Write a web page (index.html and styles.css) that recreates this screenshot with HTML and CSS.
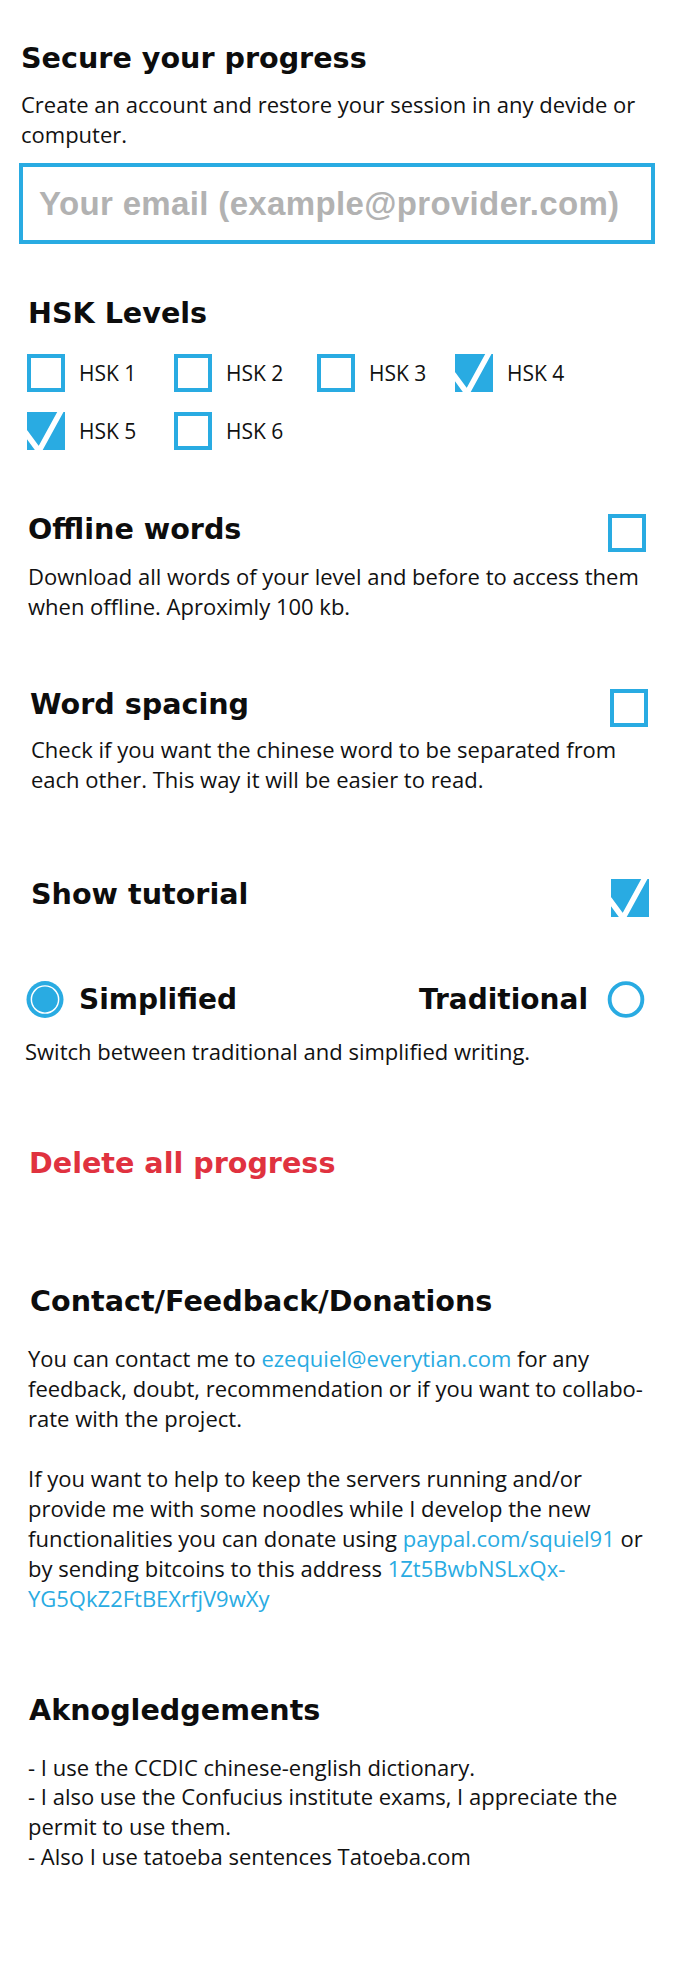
FILE: index.html
```html
<!DOCTYPE html>
<html lang="en">
<head>
<meta charset="utf-8">
<title>Settings</title>
<link rel="stylesheet" href="styles.css">
</head>
<body>
<main class="settings">

  <section class="sec sec-account">
    <h2 class="title">Secure your progress</h2>
    <p class="desc">Create an account and restore your session in any devide or<br>computer.</p>
    <input class="email" type="email" placeholder="Your email (example@provider.com)">
  </section>

  <section class="sec sec-hsk">
    <h2 class="title">HSK Levels</h2>
    <div class="levels">
      <label class="level">
        <svg class="box" viewBox="0 0 38 38"><rect x="2" y="2" width="34" height="34" fill="#fff" stroke="#29abe2" stroke-width="4"/></svg>
        <span>HSK 1</span>
      </label>
      <label class="level">
        <svg class="box" viewBox="0 0 38 38"><rect x="2" y="2" width="34" height="34" fill="#fff" stroke="#29abe2" stroke-width="4"/></svg>
        <span>HSK 2</span>
      </label>
      <label class="level">
        <svg class="box" viewBox="0 0 38 38"><rect x="2" y="2" width="34" height="34" fill="#fff" stroke="#29abe2" stroke-width="4"/></svg>
        <span>HSK 3</span>
      </label>
      <label class="level">
        <svg class="box" viewBox="0 0 38 38"><rect width="38" height="38" fill="#29abe2"/><polyline points="-2,20 12,39 35,-3" fill="none" stroke="#fff" stroke-width="5.5"/></svg>
        <span>HSK 4</span>
      </label>
      <label class="level">
        <svg class="box" viewBox="0 0 38 38"><rect width="38" height="38" fill="#29abe2"/><polyline points="-2,20 12,39 35,-3" fill="none" stroke="#fff" stroke-width="5.5"/></svg>
        <span>HSK 5</span>
      </label>
      <label class="level">
        <svg class="box" viewBox="0 0 38 38"><rect x="2" y="2" width="34" height="34" fill="#fff" stroke="#29abe2" stroke-width="4"/></svg>
        <span>HSK 6</span>
      </label>
    </div>
  </section>

  <section class="sec sec-offline">
    <div class="option">
      <h2 class="title">Offline words</h2>
      <svg class="box opt-box" viewBox="0 0 38 38"><rect x="2" y="2" width="34" height="34" fill="#fff" stroke="#29abe2" stroke-width="4"/></svg>
    </div>
    <p class="desc opt-desc">Download all words of your level and before to access them<br>when offline. Aproximly 100 kb.</p>
  </section>

  <section class="sec sec-spacing">
    <div class="option">
      <h2 class="title">Word spacing</h2>
      <svg class="box opt-box" viewBox="0 0 38 38"><rect x="2" y="2" width="34" height="34" fill="#fff" stroke="#29abe2" stroke-width="4"/></svg>
    </div>
    <p class="desc opt-desc-tight">Check if you want the chinese word to be separated from<br>each other. This way it will be easier to read.</p>
  </section>

  <section class="sec sec-tutorial">
    <div class="option">
      <h2 class="title">Show tutorial</h2>
      <svg class="box opt-box" viewBox="0 0 38 38"><rect width="38" height="38" fill="#29abe2"/><polyline points="-2,20 12,39 35,-3" fill="none" stroke="#fff" stroke-width="5.5"/></svg>
    </div>
  </section>

  <section class="sec sec-script">
    <div class="radios">
      <label class="radio">
        <svg class="dot" viewBox="0 0 38 38"><circle cx="19" cy="19" r="19" fill="#29abe2"/><circle cx="19" cy="19" r="14" fill="none" stroke="#fff" stroke-width="1.5"/></svg>
        <span class="radio-label">Simplified</span>
      </label>
      <label class="radio radio-right">
        <span class="radio-label">Traditional</span>
        <svg class="dot" viewBox="0 0 38 38"><circle cx="19" cy="19" r="16.8" fill="#fff" stroke="#29abe2" stroke-width="4"/></svg>
      </label>
    </div>
    <p class="desc script-desc">Switch between traditional and simplified writing.</p>
  </section>

  <section class="sec sec-delete">
    <button class="danger" type="button">Delete all progress</button>
  </section>

  <section class="sec sec-contact">
    <h2 class="title">Contact/Feedback/Donations</h2>
    <p class="para">You can contact me to <a class="link" href="#">ezequiel@everytian.com</a> for any<br>feedback, doubt, recommendation or if you want to collabo-<br>rate with the project.</p>
    <p class="para para-gap">If you want to help to keep the servers running and/or<br>provide me with some noodles while I develop the new<br>functionalities you can donate using <a class="link" href="#">paypal.com/squiel91</a> or<br>by sending bitcoins to this address <a class="link" href="#">1Zt5BwbNSLxQx-<br>YG5QkZ2FtBEXrfjV9wXy</a></p>
  </section>

  <section class="sec sec-ack">
    <h2 class="title">Aknogledgements</h2>
    <p class="para ack-list">- I use the CCDIC chinese-english dictionary.<br>- I also use the Confucius institute exams, I appreciate the<br>permit to use them.<br>- Also I use tatoeba sentences Tatoeba.com</p>
  </section>

</main>
</body>
</html>
```

FILE: styles.css
```css
* {
  box-sizing: border-box;
}

html, body {
  margin: 0;
  padding: 0;
  background: #ffffff;
}

body {
  color: #111111;
  font-family: "Open Sans", "Liberation Sans", sans-serif;
  font-size: 22px;
}

.settings {
  display: flex;
  flex-direction: column;
  padding-bottom: 118px;
}

.title {
  margin: 0;
  font-family: "DejaVu Sans", "Liberation Sans", sans-serif;
  font-weight: bold;
  font-size: 28.6px;
  line-height: 34px;
  color: #0d0d0d;
}

.desc {
  margin: 0;
  font-size: 22px;
  line-height: 29.5px;
  white-space: nowrap;
}

/* Secure your progress */
.sec-account {
  padding: 41px 0 0 21px;
}

.sec-account .desc {
  margin-top: 15px;
}

.email {
  display: block;
  margin: 14px 0 0 -2px;
  width: 636px;
  height: 81px;
  border: 4px solid #29abe2;
  border-radius: 0;
  padding: 0 16px;
  background: #fff;
  font-family: "Liberation Sans", Arial, sans-serif;
  font-weight: bold;
  font-size: 33px;
  letter-spacing: 0.35px;
  color: #333;
  outline: none;
}

.email::placeholder {
  color: #b2b2b2;
  opacity: 1;
}

/* HSK levels */
.sec-hsk {
  margin-top: 52px;
  padding-left: 28px;
}

.levels {
  margin-top: 24px;
  margin-left: -1px;
  display: grid;
  grid-template-columns: 147px 143px 138px auto;
  row-gap: 20px;
}

.level {
  display: flex;
  align-items: center;
  gap: 14px;
  font-size: 21px;
  line-height: 38px;
}

.box {
  display: block;
  width: 38px;
  height: 38px;
  flex: none;
}

/* options with a checkbox at the right */
.option {
  display: flex;
  justify-content: space-between;
  align-items: flex-start;
}

.opt-box {
  margin-top: 2px;
}

.sec-offline {
  margin-top: 62px;
  padding: 0 31px 0 28px;
}

.opt-desc {
  margin-top: 10px;
}

.sec-spacing {
  margin-top: 66px;
  padding: 0 29px 0 30px;
}

.opt-desc-tight {
  margin-top: 8px;
  margin-left: 1px;
}

.sec-tutorial {
  margin-top: 83px;
  padding: 0 28px 0 31px;
}

/* simplified / traditional */
.sec-script {
  margin-top: 64px;
  padding: 0 32px 0 26px;
}

.radios {
  display: flex;
  justify-content: space-between;
  align-items: center;
}

.radio {
  display: flex;
  align-items: center;
  gap: 15px;
}

.radio-right {
  gap: 19px;
}

.dot {
  display: block;
  width: 38px;
  height: 37px;
  flex: none;
}

.radio-label {
  font-family: "DejaVu Sans", "Liberation Sans", sans-serif;
  font-weight: bold;
  font-size: 28px;
  line-height: 34px;
  color: #0d0d0d;
}

.script-desc {
  margin-top: 19px;
  margin-left: -1px;
}

/* delete */
.sec-delete {
  margin-top: 79px;
  padding-left: 29px;
}

.danger {
  display: block;
  margin: 0;
  padding: 0;
  border: 0;
  background: none;
  font-family: "DejaVu Sans", "Liberation Sans", sans-serif;
  font-weight: bold;
  font-size: 28.6px;
  line-height: 34px;
  color: #e0323f;
  text-align: left;
  cursor: pointer;
}

/* contact */
.sec-contact {
  margin-top: 104px;
  padding-left: 30px;
}

.para {
  margin: 25px 0 0 -2px;
  font-size: 22px;
  line-height: 30px;
  white-space: nowrap;
}

.para-gap {
  margin-top: 30px;
}

.link {
  color: #29abe2;
  text-decoration: none;
}

/* acknowledgements */
.sec-ack {
  margin-top: 80px;
  padding-left: 29px;
}

.ack-list {
  margin-top: 26px;
  margin-left: -1px;
  line-height: 29.7px;
}
```
